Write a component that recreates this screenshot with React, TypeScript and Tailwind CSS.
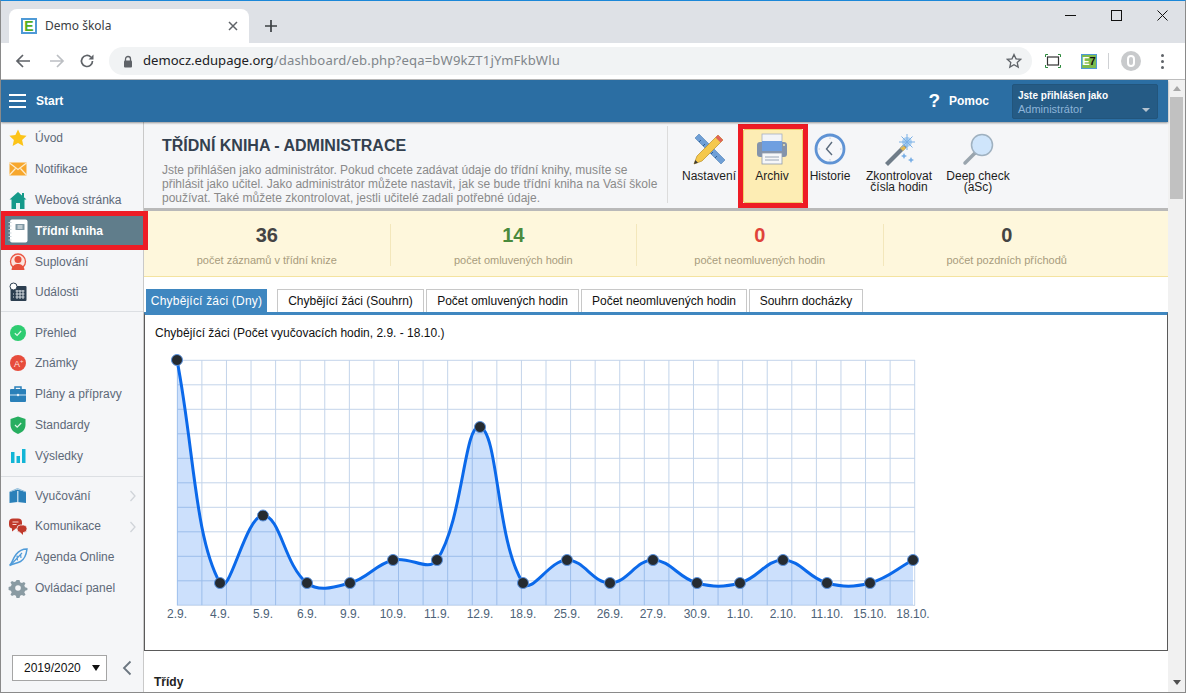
import React from "react";

const pts: [number, number, string][] = [
  [177, 360, "2.9."], [220, 583, "4.9."], [263, 515.5, "5.9."], [307, 583, "6.9."], [350, 583, "9.9."], [393, 560, "10.9."],
  [437, 560, "11.9."], [480, 427, "12.9."], [523, 583, "18.9."], [567, 560, "25.9."], [610, 583, "26.9."], [653, 560, "27.9."],
  [697, 583, "30.9."], [740, 583, "1.10."], [783, 560, "2.10."], [827, 583, "11.10."], [870, 583, "15.10."], [913, 560, "18.10."],
];

function curve() {
  const t = 0.4;
  const c = pts.map((p, i) => {
    const a = pts[i - 1] ?? p;
    const b = pts[i + 1] ?? p;
    const d1 = Math.hypot(p[0] - a[0], p[1] - a[1]);
    const d2 = Math.hypot(b[0] - p[0], b[1] - p[1]);
    const s = d1 + d2 || 1;
    return {
      ix: p[0] - (t * d1 / s) * (b[0] - a[0]),
      iy: p[1] - (t * d1 / s) * (b[1] - a[1]),
      ox: p[0] + (t * d2 / s) * (b[0] - a[0]),
      oy: p[1] + (t * d2 / s) * (b[1] - a[1]),
    };
  });
  let d = `M${pts[0][0]} ${pts[0][1]}`;
  for (let i = 1; i < pts.length; i++) {
    d += ` C${c[i - 1].ox} ${c[i - 1].oy} ${c[i].ix} ${c[i].iy} ${pts[i][0]} ${pts[i][1]}`;
  }
  return d;
}

function Chart() {
  const d = curve();
  const xs = Array.from({ length: 31 }, (_, i) => 177.3 + i * 24.58);
  const ys = Array.from({ length: 11 }, (_, i) => 360.3 + i * 24.5);
  return (
    <svg width="800" height="285" viewBox="145 345 800 285" className="block mt-[5px]">
      {xs.map((x) => <line key={x} x1={x} x2={x} y1="360" y2="605.5" stroke="#c3d4ea" strokeWidth="1" />)}
      {ys.map((y) => <line key={y} x1="177" x2="915" y1={y} y2={y} stroke="#c3d4ea" strokeWidth="1" />)}
      <path d={`${d} L913 605 L177 605 Z`} fill="#0066ee" fillOpacity="0.2" />
      <path d={d} fill="none" stroke="#0b69ea" strokeWidth="3" />
      {pts.map((p) => <circle key={p[2]} cx={p[0]} cy={p[1]} r="5.5" fill="#252b31" stroke="#5b93e0" strokeWidth="1" />)}
      {pts.map((p) => (
        <text key={p[2]} x={p[0]} y="618" textAnchor="middle" fontSize="12" fontFamily="Liberation Sans" fill="#4d6277">{p[2]}</text>
      ))}
    </svg>
  );
}

const I = ({ children }: { children: React.ReactNode }) => (
  <svg width="20" height="20" viewBox="0 0 20 20" className="shrink-0">{children}</svg>
);

const icons: Record<string, React.ReactNode> = {
  star: <I><path d="M10 1.500l2.600 5.600 6 .7-4.500 4.100 1.300 6L10 14.900l-5.400 3 1.300-6L1.400 7.800l6-.7z" fill="#fcc419" /></I>,
  mail: <I><rect x="1.500" y="3.500" width="17" height="13" fill="#f7a72d" /><path d="M1.500 4l8.500 6.500L18.500 4M1.500 16l6-6.500M18.500 16l-6-6.500" stroke="#fdeccd" strokeWidth="1.200" fill="none" /></I>,
  home: <I><path d="M10 2l8.500 7.500h-2V19h-13V9.500h-2z" fill="#159a8a" /><rect x="14" y="3" width="2" height="4" fill="#159a8a" /><rect x="8" y="13" width="4" height="6" fill="#e6f4f2" /></I>,
  book: (
    <svg width="20" height="24" viewBox="0 0 20 24" className="shrink-0 -my-[2px]">
      <rect x="2" y="0.500" width="17.500" height="23" rx="2" fill="#fff" />
      <rect x="7.500" y="5" width="9" height="6" rx=".5" fill="#7f98a4" />
      <path d="M9.500 7h5M9.500 9h5" stroke="#fff" strokeWidth="1" />
      <path d="M0.500 3.500h3M0.500 7h3M0.500 10.500h3M0.500 14h3M0.500 17.500h3M0.500 21h3" stroke="#c9d5da" strokeWidth="1" />
    </svg>
  ),
  sub: <I><circle cx="10" cy="9.500" r="7.500" fill="#fbe4de" stroke="#ea5744" strokeWidth="1.300" /><circle cx="10" cy="7.500" r="3.500" fill="#e8503c" /><path d="M3.500 18c.5-5 4-6 6.500-6s6 1 6.500 6z" fill="#e8503c" /></I>,
  cal: <I><rect x="2.500" y="4" width="16" height="15" rx="1" fill="#2c3e50" /><circle cx="5.500" cy="4.500" r="3.500" fill="#fff" stroke="#2c3e50" strokeWidth="1" /><path d="M7.500 9h9M7.500 12h9M7.500 15h9M9 8v9M12 8v9M15 8v9M5 12h1M5 15h1" stroke="#d5dbe0" strokeWidth="1" /></I>,
  ok: <I><circle cx="10" cy="10" r="8" fill="#2ecc71" /><path d="M6.800 10.300l2.300 2.200 4-4.500" stroke="#dff8e8" strokeWidth="1.200" fill="none" /></I>,
  grade: <I><circle cx="10" cy="10" r="8" fill="#e74c3c" /><text x="6" y="14" fontSize="9" fontFamily="Liberation Sans" fill="#fde2de">A</text><text x="12" y="10" fontSize="6" fontFamily="Liberation Sans" fill="#fde2de">+</text></I>,
  case: <I><path d="M7 5V3h6v2" fill="none" stroke="#2a80b9" strokeWidth="1.500" /><rect x="2" y="5" width="16" height="13" rx="1" fill="#2a80b9" /><path d="M2 11h16" stroke="#cfe4f2" strokeWidth="1" /><circle cx="10" cy="11" r="1.200" fill="#e6f1f8" /></I>,
  shield: <I><path d="M10 1.500l7.500 2.500v6c0 4.500-3.500 7.500-7.500 9-4-1.500-7.500-4.500-7.500-9V4z" fill="#27ae60" /><path d="M7 10l2.200 2.200 4-4.200" stroke="#dff5e8" strokeWidth="1.200" fill="none" /></I>,
  bars: <I><rect x="3" y="6" width="3.500" height="11" fill="#12b5d6" /><rect x="8.500" y="10" width="3.500" height="7" fill="#12b5d6" /><rect x="14" y="3" width="3.500" height="14" fill="#12b5d6" /></I>,
  learn: <I><path d="M1.500 6L9.500 3.500l8.500 2.500v11l-8.500-1-8 1z" fill="#2a80b9" /><path d="M9.800 5v11" stroke="#dcebf5" strokeWidth="1.200" /><path d="M1.500 6L9.500 2.500 18 6" stroke="#8ab9d9" strokeWidth="1" fill="none" /></I>,
  chat: <I><rect x="1" y="2.500" width="13" height="10" rx="4" fill="#c0392b" /><path d="M4 11.500v4l4-3z" fill="#c0392b" /><path d="M4.500 6h6M4.500 8.500h4" stroke="#f6d5d1" strokeWidth="1.200" /><rect x="9" y="9" width="10" height="7.500" rx="3.500" fill="#c0392b" stroke="#f5f6f8" strokeWidth=".8" /><path d="M15 16v3l-3-3z" fill="#c0392b" /></I>,
  feather: <I><path d="M1.500 18.500C4 17 4.500 12 8 7.500S15 2 19 2c-.5 4-2 10-6.500 12.500-4 2-7 2-11 4z" fill="none" stroke="#4f9bd9" strokeWidth="1.500" /><path d="M3.500 17L14 6M9 8.500l.5 5M12.500 7l.5 4" stroke="#4f9bd9" strokeWidth="1.200" fill="none" /></I>,
  gear: <I><path d="M10 2l1.500 0 .6 2.300 1.800.8 2.100-1.200 1.500 1.500-1.200 2.100.8 1.800 2.300.6v2.200l-2.300.6-.8 1.800 1.200 2.100-1.500 1.500-2.100-1.200-1.800.8-.6 2.300H8.500l-.6-2.300-1.800-.8-2.100 1.200-1.500-1.500 1.200-2.100-.8-1.800-2.300-.6V8.900l2.300-.6.8-1.800-1.200-2.100 1.500-1.500 2.100 1.200 1.800-.8L8.500 2z" fill="#8a9ba3" /><circle cx="10" cy="10" r="2.800" fill="#f5f6f8" /></I>,
};

function Item({ icon, label, active, more }: { icon: string; label: string; active?: boolean; more?: boolean }) {
  return (
    <div className={`relative flex items-center h-[30.8px] pl-[7px] gap-[7px] text-[12px] ${active ? "font-bold text-white" : "text-[#5d6978]"}`}>
      {active && <div className="absolute left-[-1px] top-[-4px] w-[148px] h-[39px] border-[5px] border-[#ee1c25] bg-[#607d8b]" />}
      <span className="relative flex w-[20px] justify-center">{icons[icon]}</span>
      <span className="relative">{label}</span>
      {more && (
        <svg width="8" height="12" viewBox="0 0 8 12" className="absolute left-[128px] top-[10px]">
          <path d="M1.500 1l4.500 5-4.500 5" fill="none" stroke="#d0d4d9" strokeWidth="1.300" />
        </svg>
      )}
    </div>
  );
}

function Tool({ w, label, active, children }: { w: string; label: React.ReactNode; active?: boolean; children: React.ReactNode }) {
  return (
    <div className={`relative flex flex-col items-center pt-[11px] ${w} text-[12px] leading-[11px] text-[#1d1d1d] text-center`}>
      {active && <div className="absolute left-[-5px] right-[-7px] top-[2px] h-[84px] border-[5px] border-[#ee1c25]"><div className="h-full bg-[#fdedb4] border border-[#eecf6b] rounded-[2px]" /></div>}
      <div className="relative h-[33px]">{children}</div>
      <div className="relative mt-[5px] whitespace-nowrap">{label}</div>
    </div>
  );
}

function Stat({ value, label, color, last }: { value: string; label: string; color: string; last?: boolean }) {
  return (
    <div className={`w-[246.500px] h-[42px] flex flex-col items-center ${last ? "" : "border-r border-[#f3e7bb]"}`}>
      <div className={`text-[20px] leading-[22px] font-bold ${color}`}>{value}</div>
      <div className="text-[11px] leading-[14px] mt-[7px] text-[#a89c7c]">{label}</div>
    </div>
  );
}

function Tab({ label, active, w }: { label: string; active?: boolean; w: string }) {
  return (
    <div className={`h-[23px] ${w} flex items-center justify-center text-[12px] ${active ? "bg-[#3f87c0] text-white tracking-[.2px]" : "bg-white border border-b-0 border-[#c8c8c8] text-[#111]"}`}>{label}</div>
  );
}

export default function App() {
  return (
    <div className="w-[1186px] h-[693px] overflow-hidden flex flex-col border-t border-t-[#1b87d8] border-x border-b border-x-[#8a8a8a] border-b-[#8a8a8a] bg-white font-['Liberation_Sans',sans-serif]">
      {/* tab strip */}
      <div className="h-[42px] shrink-0 bg-[#dee1e6] flex items-end pl-[8px] relative">
        <div className="w-[240px] h-[34px] bg-white rounded-t-[8px] flex items-center pl-[12px] pr-[10px]">
          <div className="w-[16px] h-[16px] border-2 border-[#4e9ad6] bg-white flex items-center justify-center text-[14px] leading-none font-bold text-[#53ad1c]">E</div>
          <span className="ml-[8px] text-[12px] text-[#3c4043] font-['Noto_Sans',sans-serif]">Demo škola</span>
          <svg width="10" height="10" viewBox="0 0 10 10" className="ml-auto mr-[1px]"><path d="M1 1l8 8M9 1l-8 8" stroke="#5f6368" strokeWidth="1.500" /></svg>
        </div>
        <svg width="14" height="14" viewBox="0 0 14 14" className="ml-[15px] mb-[10px]"><path d="M7 1v12M1 7h12" stroke="#3c4043" strokeWidth="1.700" /></svg>
        <div className="ml-auto flex items-center h-[28px] self-start mr-[0px]">
          <div className="w-[46px] flex justify-center"><svg width="11" height="11" viewBox="0 0 11 11"><path d="M0 5.500h11" stroke="#111" /></svg></div>
          <div className="w-[46px] flex justify-center"><svg width="11" height="11" viewBox="0 0 11 11"><rect x=".5" y=".5" width="10" height="10" fill="none" stroke="#111" /></svg></div>
          <div className="w-[46px] flex justify-center"><svg width="11" height="11" viewBox="0 0 11 11"><path d="M.5.5l10 10M10.500.5l-10 10" stroke="#111" /></svg></div>
        </div>
      </div>
      {/* toolbar */}
      <div className="h-[37px] shrink-0 bg-white border-b border-[#bdbdbd] flex items-center relative">
        <svg width="16" height="16" viewBox="0 0 16 16" className="ml-[14px]"><path d="M15 8H2M8 2L2 8l6 6" fill="none" stroke="#5f6368" strokeWidth="1.700" /></svg>
        <svg width="16" height="16" viewBox="0 0 16 16" className="ml-[18px]"><path d="M1 8h13M8 2l6 6-6 6" fill="none" stroke="#bcbfc3" strokeWidth="1.700" /></svg>
        <svg width="16" height="16" viewBox="0 0 16 16" className="ml-[14px]"><path d="M13.500 8a5.500 5.500 0 1 1-1.600-3.900" fill="none" stroke="#5f6368" strokeWidth="1.700" /><path d="M14.500 1.500v5h-5z" fill="#5f6368" /></svg>
        <div className="ml-[14px] w-[923px] h-[28px] rounded-full bg-[#f1f3f4] flex items-center pl-[14px] pr-[10px]">
          <svg width="10" height="13" viewBox="0 0 10 13"><path d="M2.500 6V4a2.500 2.500 0 0 1 5 0v2" fill="none" stroke="#5f6368" strokeWidth="1.300" /><rect x="1" y="5.500" width="8" height="7" rx="1" fill="#5f6368" /></svg>
          <span className="ml-[10px] text-[13.100px] text-[#202124] font-['Noto_Sans',sans-serif]">democz.edupage.org<span className="text-[#80868b] tracking-[.16px]">/dashboard/eb.php?eqa=bW9kZT1jYmFkbWlu</span></span>
          <svg width="16" height="16" viewBox="0 0 16 16" className="ml-auto"><path d="M8 1.500l2 4.300 4.700.5-3.500 3.200 1 4.600L8 11.700l-4.200 2.400 1-4.600L1.300 6.300 6 5.800z" fill="none" stroke="#5f6368" strokeWidth="1.300" /></svg>
        </div>
        <svg width="16" height="14" viewBox="0 0 16 14" className="ml-[13px]"><rect x="2.500" y="3" width="11" height="8" fill="#fff" stroke="#333" strokeWidth="1.200" /><path d="M0.500 3V.5H3M13 .5h2.500V3M15.500 11v2.500H13M3 13.500H.5V11" fill="none" stroke="#2c8a3c" /></svg>
        <div className="ml-[20px] w-[16px] h-[15px] bg-[#7dbb4d] border border-[#4e9ad6] text-[11px] leading-[13px] font-bold flex items-center justify-center"><span className="text-white">E</span><span className="text-[#111]">7</span></div>
        <div className="ml-[11px] w-px h-[16px] bg-[#cfd1d4]" />
        <div className="ml-[12px] w-[20px] h-[20px] rounded-full bg-[#c8cacc] flex items-center justify-center"><div className="w-[8px] h-[12px] rounded-full border-2 border-white" /></div>
        <div className="ml-[20px] flex flex-col gap-[3px]">
          <div className="w-[3px] h-[3px] rounded-full bg-[#5f6368]" />
          <div className="w-[3px] h-[3px] rounded-full bg-[#5f6368]" />
          <div className="w-[3px] h-[3px] rounded-full bg-[#5f6368]" />
        </div>
      </div>
      <div className="flex flex-1 min-h-0">
        <div className="w-[1167px] flex flex-col min-h-0">
          {/* app header */}
          <div className="relative z-10 h-[42px] shrink-0 bg-[#2b6ea3] shadow-[0_1px_2px_rgba(0,0,0,.4)] flex items-center text-white font-bold text-[12px]">
            <div className="ml-[8px] flex flex-col gap-[4px]">
              <div className="w-[17px] h-[2px] bg-white" />
              <div className="w-[17px] h-[2px] bg-white" />
              <div className="w-[17px] h-[2px] bg-white" />
            </div>
            <span className="ml-[10px]">Start</span>
            <span className="ml-auto text-[19px]">?</span>
            <span className="ml-[9px]">Pomoc</span>
            <div className="relative ml-[23px] mr-[10px] w-[146px] h-[35px] bg-[#255b85] border border-[#22557c] rounded-[2px] pl-[5px] pt-[4px] text-[10px] leading-[14px]">
              <div>Jste přihlášen jako</div>
              <div className="font-normal text-[#8db4d8] text-[11px] -mt-[1px]">Administrátor</div>
              <div className="absolute right-[7px] bottom-[6px] w-0 h-0 border-x-[4px] border-x-transparent border-t-[4px] border-t-[#b5c3cf]" />
            </div>
          </div>
          <div className="flex flex-1 min-h-0">
            {/* sidebar */}
            <div className="w-[143px] shrink-0 bg-[#f5f6f8] border-r border-[#c9c9c9] flex flex-col">
              <div className="h-[1px]" />
              <Item icon="star" label="Úvod" />
              <Item icon="mail" label="Notifikace" />
              <Item icon="home" label="Webová stránka" />
              <Item icon="book" label="Třídní kniha" active />
              <Item icon="sub" label="Suplování" />
              <Item icon="cal" label="Události" />
              <div className="h-px bg-[#dcdfe3] mt-[3.500px] mb-[5px]" />
              <Item icon="ok" label="Přehled" />
              <Item icon="grade" label="Známky" />
              <Item icon="case" label="Plány a přípravy" />
              <Item icon="shield" label="Standardy" />
              <Item icon="bars" label="Výsledky" />
              <div className="h-px bg-[#dcdfe3] mt-[4.500px] mb-[3.500px]" />
              <Item icon="learn" label="Vyučování" more />
              <Item icon="chat" label="Komunikace" more />
              <Item icon="feather" label="Agenda Online" />
              <Item icon="gear" label="Ovládací panel" />
              <div className="mt-auto mb-[11px] ml-[11px] flex items-center">
                <div className="w-[95px] h-[26px] bg-white border border-[#a5a5a5] flex items-center pl-[11px] pr-[5px] text-[12px] text-[#111]">
                  2019/2020
                  <span className="ml-auto w-0 h-0 border-x-[4px] border-x-transparent border-t-[6px] border-t-[#111] mr-[1px]" />
                </div>
                <svg width="10" height="16" viewBox="0 0 10 16" className="ml-[15px]"><path d="M8.500 1.500L2 8l6.500 6.500" fill="none" stroke="#6b7680" strokeWidth="1.800" /></svg>
              </div>
            </div>
            {/* main */}
            <div className="flex-1 min-w-0 overflow-hidden">
              <div className="h-[89px] bg-[#f5f6f8] border-b-[3px] border-[#b9b9b9] flex">
                <div className="w-[524px] h-[77px] mt-[4px] border-r border-[#dcdcdc] pl-[18px] pt-[10px]">
                  <h1 className="text-[16px] leading-[20px] font-bold text-[#33404f]">TŘÍDNÍ KNIHA - ADMINISTRACE</h1>
                  <p className="mt-[7px] text-[12px] leading-[14px] text-[#8a8a8a] whitespace-nowrap">
                    Jste přihlášen jako administrátor. Pokud chcete zadávat údaje do třídní knihy, musíte se<br />
                    přihlásit jako učitel. Jako administrátor můžete nastavit, jak se bude třídní kniha na Vaší škole<br />
                    používat. Také můžete zkontrolovat, jestli učitelé zadali potřebné údaje.
                  </p>
                </div>
                <div className="flex ml-[7px]">
                  <Tool w="w-[68px]" label="Nastavení">
                    <svg width="34" height="33" viewBox="0 0 34 33">
                      <path d="M3 5l4-4 26 26-4 4z" fill="#6f9fd6" stroke="#4f7fb5" strokeWidth=".6" />
                      <path d="M7 9l2-2M11 13l2-2M15 17l2-2M19 21l2-2M23 25l2-2" stroke="#2f5f95" strokeWidth="1" />
                      <path d="M26 2l5 5L10 28l-8 3 3-8z" fill="#f5c84c" stroke="#b98f28" strokeWidth=".7" />
                      <path d="M26 2l5 5-2.500 2.500-5-5z" fill="#e0645a" />
                      <path d="M2 31l1.300-4 2.700 2.700z" fill="#3a3a3a" />
                    </svg>
                  </Tool>
                  <Tool w="w-[58px]" label="Archiv" active>
                    <svg width="32" height="33" viewBox="0 0 32 33">
                      <rect x="6" y="1" width="20" height="10" fill="#f2f4f8" stroke="#a5b0c0" strokeWidth=".8" />
                      <rect x="1" y="9" width="30" height="15" rx="3" fill="#8494ab" />
                      <rect x="6" y="8" width="20" height="10" fill="#6f9fe0" />
                      <rect x="6" y="20" width="20" height="11" fill="#f6f7f9" stroke="#8f9bad" strokeWidth=".8" />
                      <path d="M9 24h14M9 27h14" stroke="#9aa6b6" strokeWidth="1" />
                      <circle cx="28" cy="12" r="1" fill="#f1e7b4" />
                    </svg>
                  </Tool>
                  <Tool w="w-[58px]" label="Historie">
                    <svg width="32" height="32" viewBox="0 0 32 32">
                      <circle cx="16" cy="16" r="14" fill="#f6f7fa" stroke="#5f93d4" strokeWidth="2.800" />
                      <path d="M16 4.500v1.500M16 26v1.500M4.500 16H6M26 16h1.500" stroke="#c3cbd6" strokeWidth="1" />
                      <path d="M18 9L12.500 16l5.500 6" fill="none" stroke="#5b6b7d" strokeWidth="1.400" />
                    </svg>
                  </Tool>
                  <Tool w="w-[80px]" label={<>Zkontrolovat<br />čísla hodin</>}>
                    <svg width="32" height="33" viewBox="0 0 32 33">
                      <path d="M2 30L21 11l3 3L5 33z" fill="#6f7c88" />
                      <path d="M17 15l3-3 3 3-3 3z" fill="#e5b94f" />
                      <circle cx="24" cy="9" r="5" fill="#8fc0ee" fillOpacity=".7" />
                      <path d="M24 1v16M16 9h16M18.500 3.500l11 11M29.500 3.500l-11 11" stroke="#79afe6" strokeWidth="1" />
                      <path d="M21 20l1 2 2 1-2 1-1 2-1-2-2-1 2-1zM28 24l1 2 2 1-2 1-1 2-1-2-2-1 2-1z" fill="#79afe6" />
                    </svg>
                  </Tool>
                  <Tool w="w-[78px]" label={<>Deep check<br />(aSc)</>}>
                    <svg width="33" height="33" viewBox="0 0 33 33">
                      <path d="M13 20L3 30" stroke="#9aa5ae" strokeWidth="3.500" strokeLinecap="round" />
                      <circle cx="20" cy="12" r="10.500" fill="#cfe5fb" stroke="#9fb1c0" strokeWidth="1.500" />
                    </svg>
                  </Tool>
                </div>
              </div>
              <div className="h-[66px] bg-[#fef7dc] border-b border-[#f4e3a0] flex pt-[13px]">
                <Stat value="36" label="počet záznamů v třídní knize" color="text-[#444]" />
                <Stat value="14" label="počet omluvených hodin" color="text-[#4a8a3d]" />
                <Stat value="0" label="počet neomluvených hodin" color="text-[#e0433a]" />
                <Stat value="0" label="počet pozdních příchodů" color="text-[#444]" last />
              </div>
              <div className="flex pl-[2px] pt-[12px] gap-[2px]">
                <Tab label="Chybějící žáci (Dny)" active w="w-[121px] mr-[8px]" />
                <Tab label="Chybějící žáci (Souhrn)" w="w-[147px]" />
                <Tab label="Počet omluvených hodin" w="w-[153px]" />
                <Tab label="Počet neomluvených hodin" w="w-[166px]" />
                <Tab label="Souhrn docházky" w="w-[114px]" />
              </div>
              <div className="h-[339px] border-t-[3px] border-t-[#3f87c0] border-l border-b border-r border-l-[#5a5a5a] border-b-[#5a5a5a] border-r-[#5a5a5a]">
                <div className="pl-[10px] pt-[11px] text-[12px] leading-[14px] text-[#111]">Chybějící žáci (Počet vyučovacích hodin, 2.9. - 18.10.)</div>
                <Chart />
              </div>
              <div className="pl-[10px] pt-[22px] text-[12px] font-bold text-[#222]">Třídy</div>
            </div>
          </div>
        </div>
        {/* scrollbar */}
        <div className="w-[17px] shrink-0 bg-[#f1f1f1] flex flex-col items-center pt-[6px]">
          <div className="w-0 h-0 border-x-[4px] border-x-transparent border-b-[5px] border-b-[#a8a8a8]" />
          <div className="mt-[6px] w-[13px] h-[102px] bg-[#c1c1c1]" />
          <div className="mt-auto mb-[7px] w-0 h-0 border-x-[4px] border-x-transparent border-t-[5px] border-t-[#505050]" />
        </div>
      </div>
    </div>
  );
}
